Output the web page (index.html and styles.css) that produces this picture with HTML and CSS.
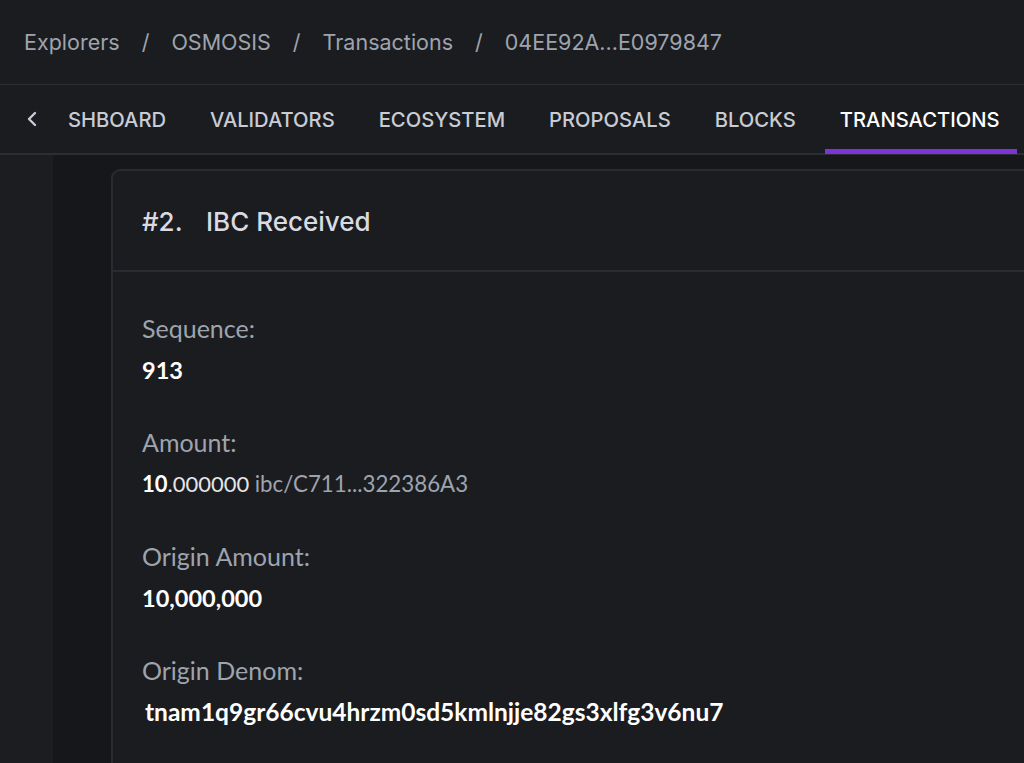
FILE: index.html
```html
<!DOCTYPE html>
<html lang="en">
<head>
    <meta charset="UTF-8">
    <title>Transaction 04EE92A...E0979847</title>
    <link rel="stylesheet" href="styles.css">
</head>
<body>
    <div class="breadcrumb">
        <span class="crumb">Explorers</span>
        <span class="sep">/</span>
        <span class="crumb">OSMOSIS</span>
        <span class="sep">/</span>
        <span class="crumb">Transactions</span>
        <span class="sep">/</span>
        <span class="crumb">04EE92A...E0979847</span>
    </div>

    <div class="tabbar">
        <button class="tab-arrow">
            <svg width="12" height="16" viewBox="0 0 12 16">
                <path d="M9 2 L3 8 L9 14" fill="none" stroke="#c8ccd4" stroke-width="2.4" stroke-linecap="round" stroke-linejoin="round"/>
            </svg>
        </button>
        <div class="tabs">
            <div class="tab">SHBOARD</div>
            <div class="tab">VALIDATORS</div>
            <div class="tab">ECOSYSTEM</div>
            <div class="tab">PROPOSALS</div>
            <div class="tab">BLOCKS</div>
            <div class="tab active">TRANSACTIONS</div>
        </div>
    </div>

    <div class="page">
        <div class="sidebar"></div>
        <div class="main">
            <div class="card">
                <div class="card-header">
                    <span class="msg-num">#2.</span>
                    <span class="msg-type">IBC Received</span>
                </div>
                <div class="card-body">
                    <div class="field">
                        <div class="label">Sequence:</div>
                        <div class="value">913</div>
                    </div>
                    <div class="field">
                        <div class="label">Amount:</div>
                        <div class="value amount"><span class="int">10</span><span class="dec">.000000</span> <span class="denom">ibc/C711...322386A3</span></div>
                    </div>
                    <div class="field">
                        <div class="label">Origin Amount:</div>
                        <div class="value">10,000,000</div>
                    </div>
                    <div class="field">
                        <div class="label">Origin Denom:</div>
                        <div class="value addr">tnam1q9gr66cvu4hrzm0sd5kmlnjje82gs3xlfg3v6nu7</div>
                    </div>
                </div>
            </div>
        </div>
    </div>
</body>
</html>
```

FILE: styles.css
```css
body {
    margin: 0;
    padding: 0;
    background-color: #1b1c20;
    font-family: Inter, "Open Sans", sans-serif;
    overflow: hidden;
}

.breadcrumb {
    height: 84px;
    display: flex;
    align-items: center;
    padding-left: 24px;
    border-bottom: 1px solid #2d2e33;
    color: #9ea4ae;
    font-size: 21.5px;
}

.sep {
    margin: 0 22px;
}

.tabbar {
    height: 68px;
    display: flex;
    align-items: stretch;
    border-bottom: 2px solid #2d2e33;
}

.tab-arrow {
    width: 46px;
    padding: 0 0 0 26px;
    background: none;
    border: none;
    display: flex;
    align-items: center;
}

.tabs {
    display: flex;
}

.tab {
    display: flex;
    align-items: center;
    padding: 5px 22px 0;
    font-size: 20.2px;
    font-weight: 500;
    color: #c8ccd4;
    border-bottom: 5px solid transparent;
    margin-bottom: -1px;
}

.tab.active {
    color: #ffffff;
    border-bottom-color: #7d34d6;
    padding: 5px 18px 0 15px;
    margin-left: 7px;
}

.page {
    display: flex;
    height: 640px;
}

.sidebar {
    width: 53px;
    background-color: #1c1d21;
}

.main {
    flex: 1;
    background-color: #16171b;
    padding: 14px 0 0 58px;
}

.card {
    background-color: #1b1c20;
    border: 2px solid #2a2b30;
    border-right: none;
    border-radius: 9px 0 0 0;
    height: 700px;
}

.card-header {
    height: 101px;
    display: flex;
    align-items: center;
    padding: 2px 0 0 29px;
    box-sizing: border-box;
    border-bottom: 2px solid #2a2b30;
    color: #d9dbe0;
    font-size: 26px;
    font-weight: 500;
}

.msg-num {
    width: 64px;
}

.card-body {
    padding: 42px 0 0 29px;
    font-family: Lato, "Open Sans", sans-serif;
}

.field {
    margin-bottom: 44px;
}

.label {
    font-size: 25px;
    line-height: 28px;
    color: #9ea4ae;
}

.value {
    margin-top: 14px;
    font-size: 23.5px;
    line-height: 28px;
    font-weight: 700;
    color: #ffffff;
}

.value.amount {
    font-size: 22px;
}

.value .dec {
    font-weight: 400;
    color: #e4e5e8;
}

.value .denom {
    font-size: 22.3px;
    font-weight: 400;
    color: #9ea4ae;
}

.value.addr {
    font-size: 24.5px;
    padding-left: 3px;
}
```
